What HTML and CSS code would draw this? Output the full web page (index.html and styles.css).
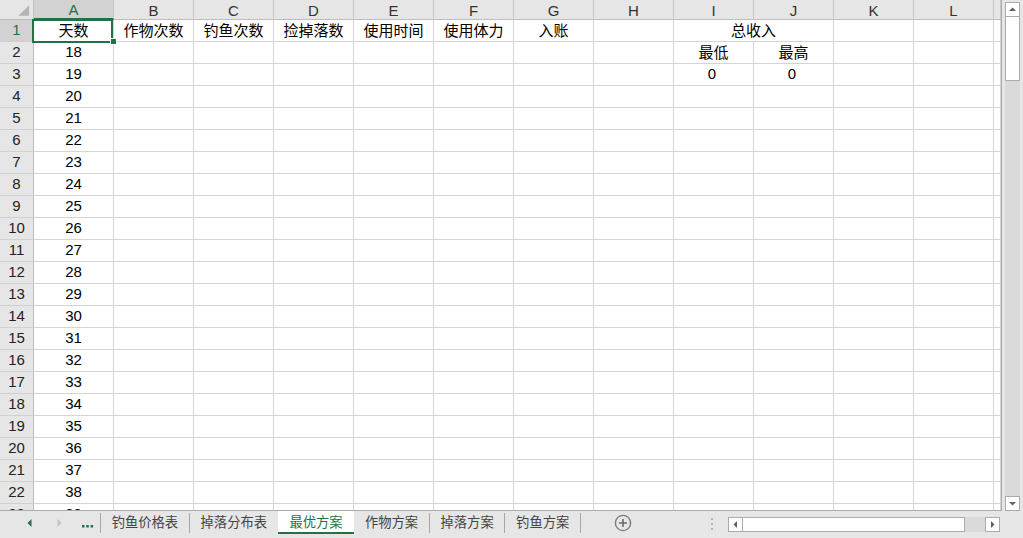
FILE: index.html
```html
<!DOCTYPE html>
<html lang="zh">
<head>
<meta charset="utf-8">
<title>最优方案</title>
<link rel="stylesheet" href="styles.css">
</head>
<body>
<div class="app">
  <div class="main">
    <div class="sheet">
      <div class="row hdr">
        <div class="corner"><svg width="34" height="20" viewBox="0 0 34 20"><polygon points="19,16 30,16 30,5" fill="#b4b4b4"/></svg></div>
        <div class="ch sel">A</div><div class="ch">B</div><div class="ch">C</div><div class="ch">D</div><div class="ch">E</div><div class="ch">F</div><div class="ch">G</div><div class="ch">H</div><div class="ch">I</div><div class="ch">J</div><div class="ch">K</div><div class="ch">L</div><div class="ch"></div>
      </div>
      <div class="row">
        <div class="rh sel">1</div><div>天数</div><div>作物次数</div><div>钓鱼次数</div><div>捡掉落数</div><div>使用时间</div><div>使用体力</div><div>入账</div><div></div><div class="span2">总收入</div><div></div><div></div><div></div>
      </div>
      <div class="row">
        <div class="rh">2</div><div>18</div><div></div><div></div><div></div><div></div><div></div><div></div><div></div><div>最低</div><div>最高</div><div></div><div></div><div></div>
      </div>
      <div class="row">
        <div class="rh">3</div><div>19</div><div></div><div></div><div></div><div></div><div></div><div></div><div></div><div class="num">0</div><div class="num">0</div><div></div><div></div><div></div>
      </div>
      <div class="row"><div class="rh">4</div><div>20</div><div></div><div></div><div></div><div></div><div></div><div></div><div></div><div></div><div></div><div></div><div></div><div></div></div>
      <div class="row"><div class="rh">5</div><div>21</div><div></div><div></div><div></div><div></div><div></div><div></div><div></div><div></div><div></div><div></div><div></div><div></div></div>
      <div class="row"><div class="rh">6</div><div>22</div><div></div><div></div><div></div><div></div><div></div><div></div><div></div><div></div><div></div><div></div><div></div><div></div></div>
      <div class="row"><div class="rh">7</div><div>23</div><div></div><div></div><div></div><div></div><div></div><div></div><div></div><div></div><div></div><div></div><div></div><div></div></div>
      <div class="row"><div class="rh">8</div><div>24</div><div></div><div></div><div></div><div></div><div></div><div></div><div></div><div></div><div></div><div></div><div></div><div></div></div>
      <div class="row"><div class="rh">9</div><div>25</div><div></div><div></div><div></div><div></div><div></div><div></div><div></div><div></div><div></div><div></div><div></div><div></div></div>
      <div class="row"><div class="rh">10</div><div>26</div><div></div><div></div><div></div><div></div><div></div><div></div><div></div><div></div><div></div><div></div><div></div><div></div></div>
      <div class="row"><div class="rh">11</div><div>27</div><div></div><div></div><div></div><div></div><div></div><div></div><div></div><div></div><div></div><div></div><div></div><div></div></div>
      <div class="row"><div class="rh">12</div><div>28</div><div></div><div></div><div></div><div></div><div></div><div></div><div></div><div></div><div></div><div></div><div></div><div></div></div>
      <div class="row"><div class="rh">13</div><div>29</div><div></div><div></div><div></div><div></div><div></div><div></div><div></div><div></div><div></div><div></div><div></div><div></div></div>
      <div class="row"><div class="rh">14</div><div>30</div><div></div><div></div><div></div><div></div><div></div><div></div><div></div><div></div><div></div><div></div><div></div><div></div></div>
      <div class="row"><div class="rh">15</div><div>31</div><div></div><div></div><div></div><div></div><div></div><div></div><div></div><div></div><div></div><div></div><div></div><div></div></div>
      <div class="row"><div class="rh">16</div><div>32</div><div></div><div></div><div></div><div></div><div></div><div></div><div></div><div></div><div></div><div></div><div></div><div></div></div>
      <div class="row"><div class="rh">17</div><div>33</div><div></div><div></div><div></div><div></div><div></div><div></div><div></div><div></div><div></div><div></div><div></div><div></div></div>
      <div class="row"><div class="rh">18</div><div>34</div><div></div><div></div><div></div><div></div><div></div><div></div><div></div><div></div><div></div><div></div><div></div><div></div></div>
      <div class="row"><div class="rh">19</div><div>35</div><div></div><div></div><div></div><div></div><div></div><div></div><div></div><div></div><div></div><div></div><div></div><div></div></div>
      <div class="row"><div class="rh">20</div><div>36</div><div></div><div></div><div></div><div></div><div></div><div></div><div></div><div></div><div></div><div></div><div></div><div></div></div>
      <div class="row"><div class="rh">21</div><div>37</div><div></div><div></div><div></div><div></div><div></div><div></div><div></div><div></div><div></div><div></div><div></div><div></div></div>
      <div class="row"><div class="rh">22</div><div>38</div><div></div><div></div><div></div><div></div><div></div><div></div><div></div><div></div><div></div><div></div><div></div><div></div></div>
      <div class="row"><div class="rh">23</div><div>39</div><div></div><div></div><div></div><div></div><div></div><div></div><div></div><div></div><div></div><div></div><div></div><div></div></div>
      <div class="selbox"></div>
      <div class="handle"></div>
    </div>
    <div class="vscroll">
      <div class="sbtn"><svg width="13" height="13" viewBox="0 0 13 13"><polygon points="3,8 10,8 6.5,4.5" fill="#606060"/></svg></div>
      <div class="vthumb"></div>
      <div class="vtrack"></div>
      <div class="sbtn"><svg width="13" height="13" viewBox="0 0 13 13"><polygon points="3,5 10,5 6.5,8.5" fill="#606060"/></svg></div>
    </div>
  </div>
  <div class="tabbar">
    <div class="nav">
      <svg class="arr-l" width="5" height="8" viewBox="0 0 5 8"><polygon points="4.5,0 4.5,8 0.5,4" fill="#217346"/></svg>
      <svg class="arr-r" width="5" height="8" viewBox="0 0 5 8"><polygon points="0.5,0 0.5,8 4.5,4" fill="#c3c3c3"/></svg>
      <svg class="more" width="12" height="3" viewBox="0 0 12 3"><rect x="0" y="0" width="2.5" height="2.5" fill="#217346"/><rect x="4.3" y="0" width="2.5" height="2.5" fill="#217346"/><rect x="8.6" y="0" width="2.5" height="2.5" fill="#217346"/></svg>
    </div>
    <div class="sep"></div>
    <div class="tab">钓鱼价格表</div>
    <div class="sep"></div>
    <div class="tab">掉落分布表</div>
    <div class="tab active">最优方案</div>
    <div class="tab">作物方案</div>
    <div class="sep"></div>
    <div class="tab">掉落方案</div>
    <div class="sep"></div>
    <div class="tab">钓鱼方案</div>
    <div class="sep"></div>
    <svg class="add" width="18" height="18" viewBox="0 0 18 18"><circle cx="9" cy="9" r="7.6" fill="none" stroke="#7a7a7a" stroke-width="1.4"/><path d="M9 5v8M5 9h8" stroke="#6a6a6a" stroke-width="1.6"/></svg>
    <svg class="split" width="3" height="13" viewBox="0 0 3 13"><rect x="0" y="0" width="2" height="2" fill="#b3b3b3"/><rect x="0" y="5" width="2" height="2" fill="#b3b3b3"/><rect x="0" y="10" width="2" height="2" fill="#b3b3b3"/></svg>
    <div class="hscroll">
      <div class="hbtn"><svg width="13" height="13" viewBox="0 0 13 13"><polygon points="8,3 8,10 4.5,6.5" fill="#606060"/></svg></div>
      <div class="hthumb"></div>
      <div class="htrack"></div>
      <div class="hbtn"><svg width="13" height="13" viewBox="0 0 13 13"><polygon points="5,3 5,10 8.5,6.5" fill="#606060"/></svg></div>
    </div>
  </div>
</div>
</body>
</html>
```
FILE: styles.css
```css
html, body {
  margin: 0;
  padding: 0;
}
body {
  width: 1023px;
  height: 538px;
  overflow: hidden;
  background: #e6e6e6;
  font-family: "Liberation Sans", "Noto Sans CJK SC", sans-serif;
}
.app {
  display: flex;
  flex-direction: column;
  height: 538px;
}
.main {
  display: flex;
  height: 511px;
}
.sheet {
  position: relative;
  width: 1002px;
  height: 511px;
  box-sizing: border-box;
  overflow: hidden;
  background: #fff;
  border-right: 1px solid #ababab;
  border-bottom: 1px solid #ababab;
}
.row {
  display: grid;
  grid-template-columns: 34px repeat(12, 80px) 7px;
  height: 22px;
}
.row.hdr {
  height: 20px;
}
.row > div {
  box-sizing: border-box;
  border-right: 1px solid #d4d4d4;
  border-bottom: 1px solid #d4d4d4;
  display: flex;
  align-items: center;
  justify-content: center;
  padding-bottom: 2px;
  font-size: 15px;
  color: #000;
  white-space: nowrap;
  overflow: hidden;
}
.row > .span2 {
  grid-column: span 2;
}
.row > .num {
  padding-right: 3px;
}
.row > .corner {
  background: #e6e6e6;
  border-right-color: #bdbdbd;
  border-bottom-color: #bdbdbd;
  align-items: stretch;
  justify-content: stretch;
  padding: 0;
}
.row > .ch {
  background: #e6e6e6;
  color: #333;
  border-right-color: #c6c6c6;
  border-bottom-color: #bdbdbd;
  padding: 1px 0 0 0;
}
.row > .ch.sel {
  background: #d2d2d2;
  color: #217346;
  border-bottom: 2px solid #217346;
}
.row > .rh {
  background: #e6e6e6;
  color: #222;
  border-right-color: #bdbdbd;
  border-bottom-color: #d0d0d0;
}
.row > .rh.sel {
  background: #d2d2d2;
  color: #217346;
}
.selbox {
  position: absolute;
  left: 32px;
  top: 19px;
  width: 81px;
  height: 24px;
  box-sizing: border-box;
  border: 2px solid #217346;
}
.handle {
  position: absolute;
  left: 110px;
  top: 38px;
  width: 7px;
  height: 7px;
  box-sizing: border-box;
  background: #217346;
  border: 1px solid #fff;
}
.vscroll {
  width: 21px;
  height: 511px;
  box-sizing: border-box;
  padding: 2px 3px 0 3px;
  display: flex;
  flex-direction: column;
}
.sbtn {
  height: 15px;
  flex: none;
  box-sizing: border-box;
  background: #fff;
  border: 1px solid #ababab;
  display: flex;
  align-items: center;
  justify-content: center;
}
.vthumb {
  height: 64px;
  flex: none;
  box-sizing: border-box;
  background: #fff;
  border: 1px solid #ababab;
  border-top: none;
}
.vtrack {
  flex: 1;
  background: #dadada;
}
.tabbar {
  display: flex;
  align-items: flex-start;
  height: 27px;
  font-family: "Noto Sans CJK SC", sans-serif;
  font-size: 13.3px;
  color: #444;
}
.nav {
  width: 100px;
  height: 24px;
  display: flex;
  align-items: center;
}
.arr-l {
  margin-left: 27px;
}
.arr-r {
  margin-left: 25px;
}
.more {
  margin-left: 20px;
  margin-top: 7px;
}
.sep {
  width: 1px;
  height: 20px;
  margin-top: 2px;
  background: #a6a6a6;
}
.tab {
  height: 23px;
  padding: 0 10.7px;
  box-sizing: border-box;
  display: flex;
  align-items: center;
  border-bottom: 2px solid transparent;
  line-height: 1;
  white-space: nowrap;
}
.tab.active {
  background: #fff;
  color: #217346;
  border-bottom-color: #217346;
  padding: 0 11.7px;
}
.add {
  margin-left: 33px;
  margin-top: 3px;
}
.split {
  margin-left: 79px;
  margin-top: 7px;
}
.hscroll {
  margin-left: 14px;
  margin-top: 6px;
  width: 272px;
  height: 15px;
  display: flex;
}
.hbtn {
  width: 15px;
  flex: none;
  box-sizing: border-box;
  background: #fff;
  border: 1px solid #ababab;
  display: flex;
  align-items: center;
  justify-content: center;
}
.hthumb {
  width: 222px;
  flex: none;
  box-sizing: border-box;
  background: #fff;
  border: 1px solid #ababab;
  border-left: none;
}
.htrack {
  flex: 1;
  background: #dadada;
}
```
